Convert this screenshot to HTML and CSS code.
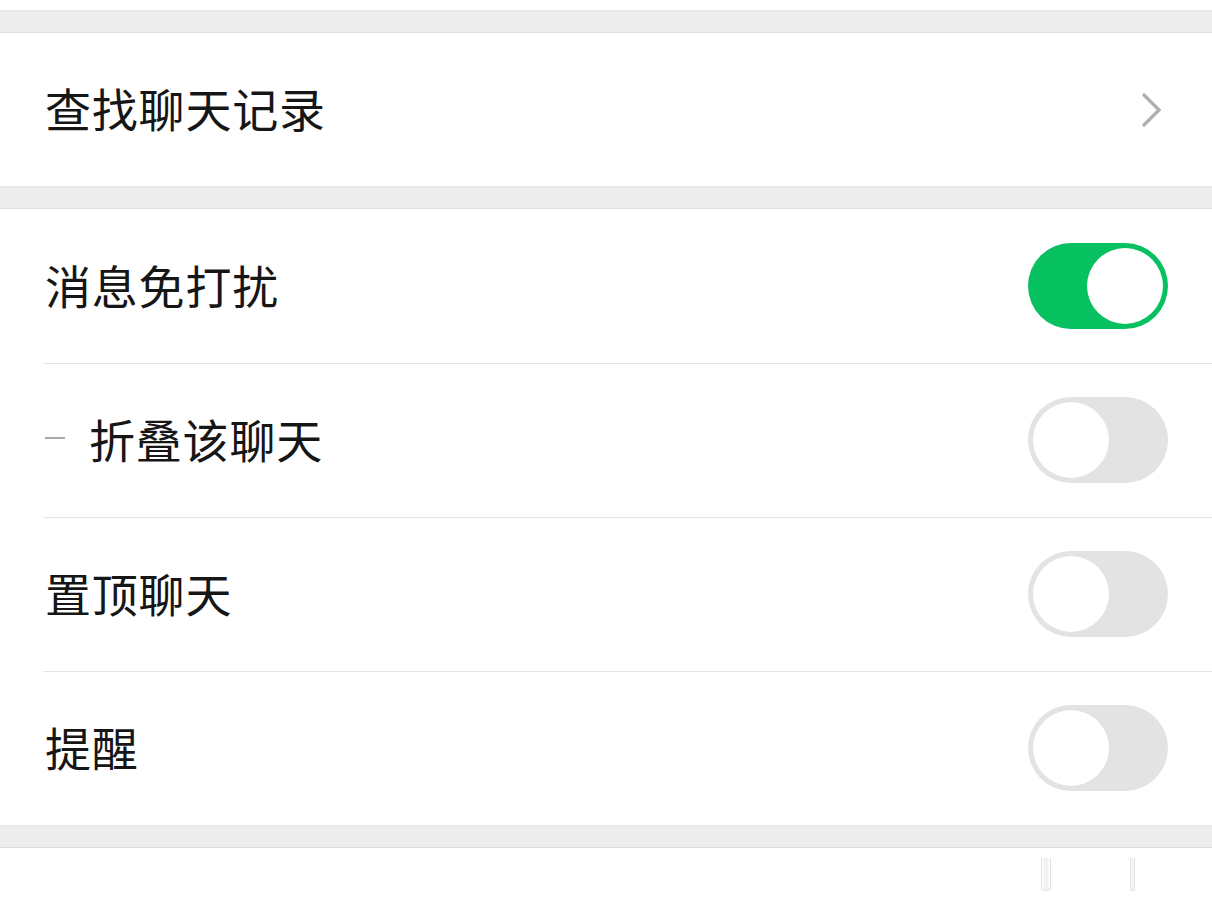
FILE: index.html
```html
<!DOCTYPE html>
<html lang="zh-CN">
<head>
<meta charset="utf-8">
<title>聊天信息</title>
<link rel="stylesheet" href="styles.css">
</head>
<body>
<div class="page">
  <div class="spacer-top"></div>
  <div class="gap"></div>
  <section class="group">
    <div class="cell cell-tall">
      <span class="label">查找聊天记录</span>
      <svg class="chevron" width="24" height="36" viewBox="0 0 24 36" aria-hidden="true">
        <polyline points="4,3 19,18 4,33" fill="none" stroke="#b0b0b0" stroke-width="3.4" stroke-linecap="round" stroke-linejoin="miter"/>
      </svg>
    </div>
  </section>
  <div class="gap"></div>
  <section class="group">
    <div class="cell">
      <span class="label">消息免打扰</span>
      <span class="switch on"><span class="knob"></span></span>
    </div>
    <div class="cell">
      <span class="label"><span class="dash"></span>折叠该聊天</span>
      <span class="switch"><span class="knob"></span></span>
    </div>
    <div class="cell">
      <span class="label">置顶聊天</span>
      <span class="switch"><span class="knob"></span></span>
    </div>
    <div class="cell">
      <span class="label">提醒</span>
      <span class="switch"><span class="knob"></span></span>
    </div>
  </section>
  <div class="gap"></div>
  <section class="group tail">
    <span class="mark mark-a"></span>
    <span class="mark mark-b"></span>
  </section>
</div>
</body>
</html>
```

FILE: styles.css
```css
* { box-sizing: border-box; }

html, body {
  margin: 0;
  padding: 0;
  background: #ffffff;
}

body {
  font-family: "Noto Sans CJK SC", "Noto Sans", sans-serif;
  color: #161616;
  width: 1212px;
  height: 904px;
  overflow: hidden;
}

.page {
  display: flex;
  flex-direction: column;
}

.spacer-top {
  height: 10px;
  background: #ffffff;
}

.gap {
  height: 23px;
  background: #ededed;
  border-top: 1px solid #e6e6e6;
  border-bottom: 1px solid #dedede;
}

.group {
  background: #ffffff;
  display: flex;
  flex-direction: column;
}

.cell {
  height: 154px;
  display: flex;
  align-items: center;
  justify-content: space-between;
  padding: 0 44px 0 45px;
  position: relative;
}

.cell-tall {
  height: 153px;
  padding-right: 48px;
}

.group .cell + .cell::before {
  content: "";
  position: absolute;
  left: 43px;
  right: 0;
  top: 0;
  height: 1px;
  background: #e5e5e5;
}

.label {
  font-size: 46px;
  font-weight: 400;
  line-height: 1;
  letter-spacing: 0.8px;
  display: flex;
  align-items: center;
  margin-top: -5px;
}

.dash {
  display: inline-block;
  width: 20px;
  height: 2px;
  background: #a8a8a8;
  margin-right: 24px;
}

.chevron {
  display: block;
}

.switch {
  width: 140px;
  height: 86px;
  border-radius: 43px;
  background: #e3e3e3;
  padding: 5px;
  display: flex;
  justify-content: flex-start;
  align-items: center;
}

.switch .knob {
  width: 76px;
  height: 76px;
  border-radius: 50%;
  background: #ffffff;
}

.switch.on {
  background: #07c160;
  justify-content: flex-end;
}

.tail {
  height: 60px;
  position: relative;
}

.mark {
  position: absolute;
  top: 10px;
  width: 6px;
  height: 33px;
  border-radius: 0 0 3px 3px;
  border: 1px solid #e2e2e2;
  border-top: none;
  background: linear-gradient(90deg, #ffffff, #eeeeee, #ffffff);
}

.mark-a { left: 1041px; width: 10px; }
.mark-b { left: 1130px; width: 5px; }
```
